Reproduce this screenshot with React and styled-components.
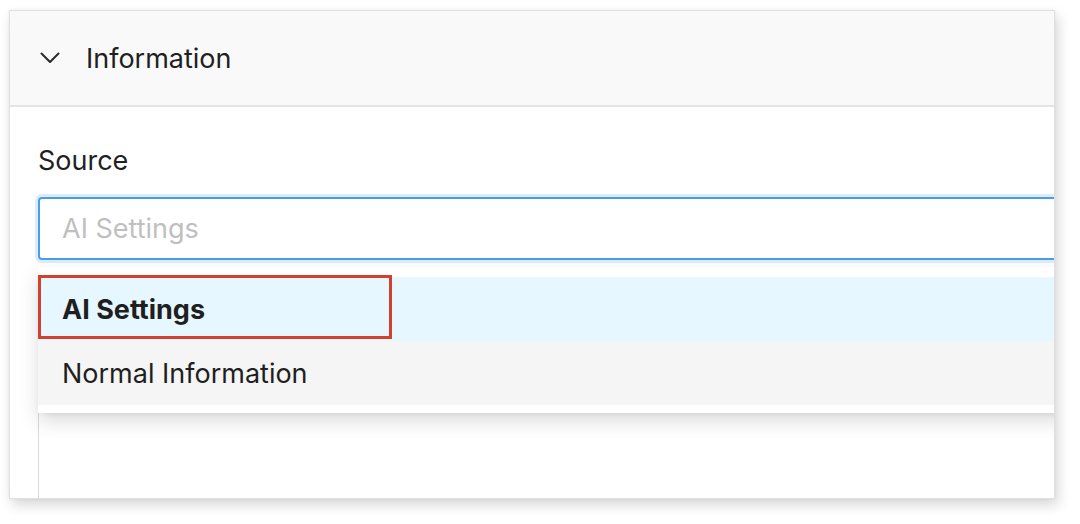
import React from "react";
import styled, { createGlobalStyle } from "styled-components";

const Global = createGlobalStyle`
  html, body { margin: 0; padding: 0; background: #ffffff; }
  body { font-family: Inter, "Noto Sans", "Liberation Sans", sans-serif; color: #1f1f1f; }
  * { box-sizing: border-box; }
`;

const Page = styled.div`
  width: 1080px;
  height: 524px;
  padding: 10px 0 0 9px;
  overflow: hidden;
`;

const Panel = styled.section`
  width: 1046px;
  height: 489px;
  border: 1px solid #e0e0e0;
  background: #ffffff;
  box-shadow: 3px 6px 12px rgba(0, 0, 0, 0.16), 0 0 3px rgba(0, 0, 0, 0.06);
  overflow: hidden;
  display: flex;
  flex-direction: column;
`;

const Header = styled.div`
  height: 96px;
  flex: none;
  display: flex;
  align-items: center;
  gap: 26px;
  padding-left: 30px;
  background: #f9f9f9;
  border-bottom: 2px solid #e4e4e4;
`;

const Title = styled.h2`
  margin: 0;
  font-size: 27px;
  font-weight: 400;
  color: #1f1f1f;
`;

const Body = styled.div`
  padding: 37px 0 0 28px;
  margin-right: -60px;
`;

const Label = styled.div`
  font-size: 27px;
  line-height: 34px;
  color: #1f1f1f;
  margin-bottom: 19px;
`;

const Field = styled.div`
  position: relative;
`;

const Input = styled.div`
  height: 63px;
  border: 2px solid #4a9ee8;
  border-radius: 4px;
  box-shadow: 0 0 0 3px rgba(74, 158, 232, 0.2);
  display: flex;
  align-items: center;
  padding-left: 22px;
  font-size: 27px;
  color: #bfbfbf;
  background: #fff;
`;

const Dropdown = styled.ul`
  position: absolute;
  left: 0;
  right: 0;
  top: 70px;
  margin: 0;
  list-style: none;
  padding: 10px 0 8px;
  background: #ffffff;
  box-shadow: 0 8px 18px rgba(0, 0, 0, 0.14), 0 3px 6px -4px rgba(0, 0, 0, 0.12);
  z-index: 2;
`;

const Option = styled.li`
  position: relative;
  height: 64px;
  display: flex;
  align-items: center;
  padding-left: 24px;
  font-size: 27px;
  font-weight: ${(p) => (p.$selected ? 700 : 400)};
  color: #1f1f1f;
  background: ${(p) => (p.$selected ? "#e6f7ff" : "#f5f5f5")};
`;

const Highlight = styled.span`
  position: absolute;
  left: 0;
  top: -2px;
  width: 354px;
  height: 64px;
  border: 3px solid #d3402d;
  pointer-events: none;
`;

const TextArea = styled.div`
  margin-top: 130px;
  height: 200px;
  border: 1px solid #d9d9d9;
  border-radius: 4px;
  background: #fff;
`;

const Chevron = () => (
  <svg width="20" height="12" viewBox="0 0 20 12" fill="none">
    <path d="M1.5 1.5 L10 10 L18.5 1.5" stroke="#2a2a2a" strokeWidth="2" strokeLinecap="round" strokeLinejoin="round" />
  </svg>
);

export default function App() {
  return (
    <>
      <Global />
      <Page>
        <Panel>
          <Header>
            <Chevron />
            <Title>Information</Title>
          </Header>
          <Body>
            <Label>Source</Label>
            <Field>
              <Input>AI Settings</Input>
              <Dropdown>
                <Option $selected>
                  AI Settings
                  <Highlight />
                </Option>
                <Option>Normal Information</Option>
              </Dropdown>
            </Field>
            <TextArea />
          </Body>
        </Panel>
      </Page>
    </>
  );
}
